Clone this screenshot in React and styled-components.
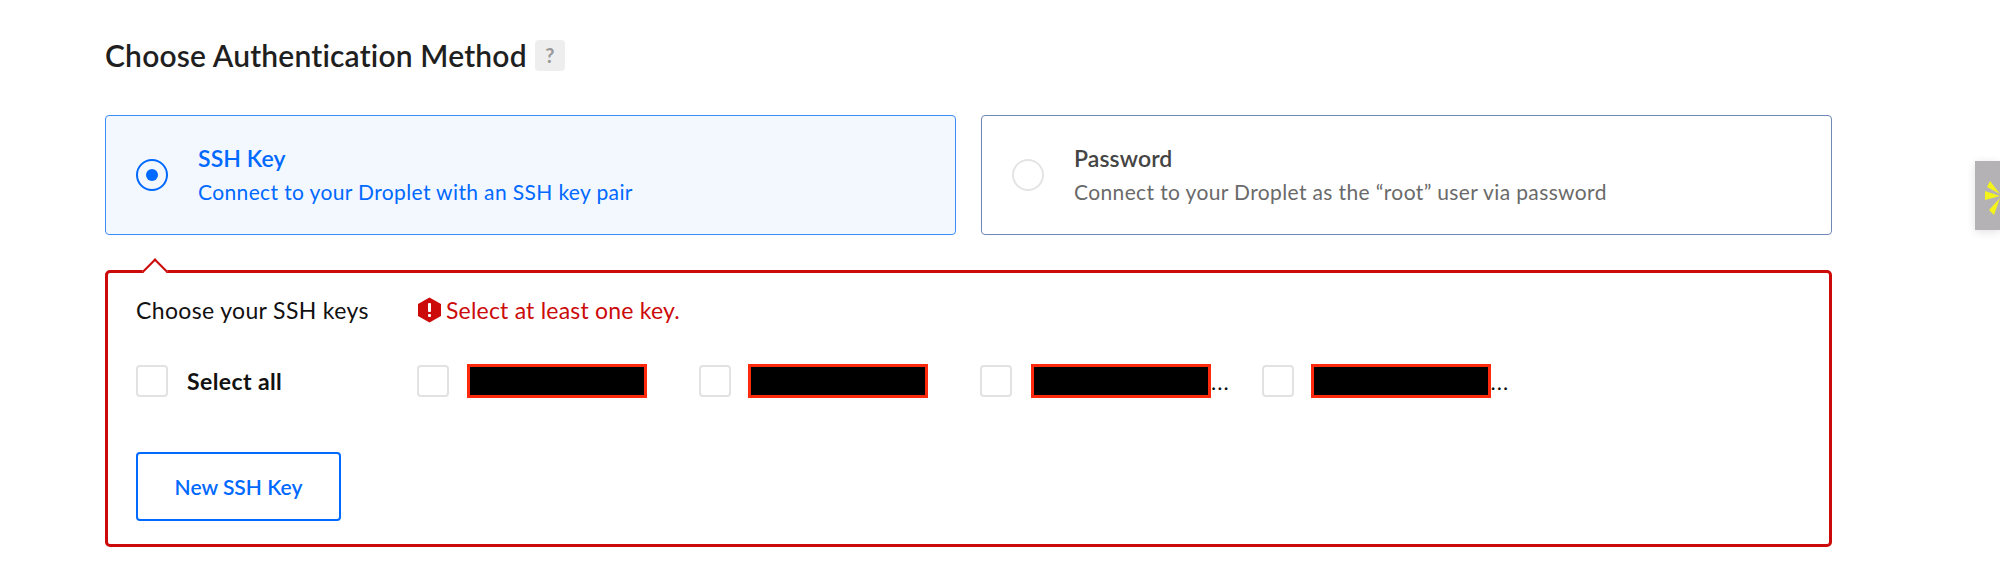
import styled, { createGlobalStyle } from "styled-components";

const GlobalStyle = createGlobalStyle`
  html, body {
    margin: 0;
    padding: 0;
    background: #fff;
    overflow: hidden;
  }
  body {
    font-family: Lato, "Open Sans", "Liberation Sans", sans-serif;
    font-variant-ligatures: none;
    color: #000;
  }
`;

const Page = styled.main`
  width: 1727px;
  padding: 35px 0 0 105px;
`;

const HeadingRow = styled.div`
  display: flex;
  align-items: center;
  gap: 8px;
  height: 40px;
  margin-bottom: 40px;
`;

const Heading = styled.h2`
  margin: 0;
  font-size: 30px;
  font-weight: 600;
  letter-spacing: 0.18px;
  color: #1f1f1f;
  line-height: 40px;
`;

const HelpBadge = styled.span`
  display: flex;
  align-items: center;
  justify-content: center;
  width: 30px;
  height: 31px;
  border-radius: 4px;
  background: #eeeeee;
  color: #999;
  font-size: 20px;
  font-weight: 700;
`;

const Options = styled.div`
  display: grid;
  grid-template-columns: 851px 851px;
  gap: 25px;
  margin-bottom: 35px;
`;

const OptionCard = styled.div`
  display: flex;
  align-items: center;
  gap: 30px;
  box-sizing: border-box;
  height: 120px;
  padding-left: 30px;
  border-radius: 4px;
  border: 1.5px solid ${({ $active }) => ($active ? "#3d8bf5" : "#7088b5")};
  background: ${({ $active }) => ($active ? "#f3f8ff" : "#fff")};
`;

const Radio = styled.span`
  display: flex;
  align-items: center;
  justify-content: center;
  flex: none;
  box-sizing: border-box;
  width: 32px;
  height: 32px;
  border-radius: 50%;
  border: ${({ $active }) =>
    $active ? "2px solid #0069ff" : "2px solid #e4e4e4"};

  &::after {
    content: "";
    display: ${({ $active }) => ($active ? "block" : "none")};
    width: 12px;
    height: 12px;
    border-radius: 50%;
    background: #0069ff;
  }
`;

const OptionText = styled.div`
  display: flex;
  flex-direction: column;
  gap: 8px;
  padding-bottom: 1px;
  color: ${({ $active }) => ($active ? "#0069ff" : "#6a6a6a")};
`;

const OptionTitle = styled.span`
  font-size: 23px;
  line-height: 26px;
  font-weight: 600;
  letter-spacing: 0.1px;
  color: ${({ $active }) => ($active ? "#0069ff" : "#444")};
`;

const OptionDesc = styled.span`
  font-size: 21px;
  line-height: 26px;
  letter-spacing: 0.37px;
`;

const KeysPanel = styled.section`
  position: relative;
  box-sizing: border-box;
  height: 277px;
  padding: 22px 28px 0;
  border: 3px solid #cc0a0a;
  border-radius: 5px;

  &::before {
    content: "";
    position: absolute;
    top: -11px;
    left: 38px;
    width: 16px;
    height: 16px;
    background: #fff;
    border-top: 2px solid #cc0a0a;
    border-left: 2px solid #cc0a0a;
    transform: rotate(45deg);
  }
`;

const KeyGrid = styled.div`
  display: grid;
  grid-template-columns: 281px repeat(4, 281.5px);
  align-items: center;
`;

const PanelLabel = styled.span`
  font-size: 23px;
  line-height: 30px;
  letter-spacing: 0.35px;
  color: #111;
`;

const ErrorText = styled.span`
  display: flex;
  align-items: center;
  gap: 4px;
  grid-column: 2 / 4;
  font-size: 23px;
  line-height: 30px;
  letter-spacing: 0.2px;
  color: #cc0a0a;
`;

const KeyRow = styled(KeyGrid)`
  margin-top: 39px;
`;

const KeyOption = styled.label`
  display: flex;
  align-items: center;
  gap: ${({ $gap }) => $gap}px;
`;

const Checkbox = styled.span`
  flex: none;
  box-sizing: border-box;
  width: 32px;
  height: 32px;
  border: 2px solid #e2e2e2;
  border-radius: 4px;
  background: #fff;
`;

const SelectAll = styled.span`
  font-size: 23px;
  font-weight: 700;
  letter-spacing: 0.4px;
  color: #111;
`;

const KeyName = styled.span`
  display: flex;
  align-items: flex-end;
  font-size: 22px;
  line-height: 32px;
  letter-spacing: 1px;
  color: #111;
`;

const Redaction = styled.span`
  display: block;
  box-sizing: border-box;
  width: 180px;
  height: 34px;
  background: #000;
  border: 3px solid #ff2a0d;
`;

const NewKeyButton = styled.button`
  display: block;
  box-sizing: border-box;
  width: 205px;
  height: 69px;
  margin-top: 54px;
  padding: 0;
  background: #fff;
  border: 2px solid #0069ff;
  border-radius: 4px;
  color: #0069ff;
  font-family: inherit;
  font-size: 21px;
  font-weight: 600;
`;

const SideTab = styled.div`
  position: fixed;
  top: 161px;
  right: 0;
  width: 25px;
  height: 69px;
  background: #b5b2b5;
  box-shadow: 0 2px 10px rgba(0, 0, 0, 0.12);
  overflow: hidden;
`;

const keys = [
  { gap: 18, more: false },
  { gap: 17, more: false },
  { gap: 19, more: true },
  { gap: 17, more: true },
];

function AlertIcon() {
  return (
    <svg width="25" height="26" viewBox="0 0 25 26" aria-hidden="true">
      <path d="M12.5 0.5 24 7v12l-11.5 6.5L1 19V7z" fill="#cc0a0a" />
      <rect x="11" y="6" width="3" height="9" rx="1" fill="#fff" />
      <rect x="11" y="17" width="3" height="3" rx="1" fill="#fff" />
    </svg>
  );
}

function SparkIcon() {
  return (
    <svg width="25" height="69" viewBox="0 0 25 69" aria-hidden="true">
      <path
        d="M25 33 15 20 12 26zM25 35 10 30v9zM25 37 19 54 14 49z"
        fill="#f4f41a"
      />
    </svg>
  );
}

export default function App() {
  return (
    <>
      <GlobalStyle />
      <Page>
        <HeadingRow>
          <Heading>Choose Authentication Method</Heading>
          <HelpBadge>?</HelpBadge>
        </HeadingRow>
        <Options>
          <OptionCard $active>
            <Radio $active />
            <OptionText $active>
              <OptionTitle $active>SSH Key</OptionTitle>
              <OptionDesc>Connect to your Droplet with an SSH key pair</OptionDesc>
            </OptionText>
          </OptionCard>
          <OptionCard>
            <Radio />
            <OptionText>
              <OptionTitle>Password</OptionTitle>
              <OptionDesc>
                Connect to your Droplet as the “root” user via password
              </OptionDesc>
            </OptionText>
          </OptionCard>
        </Options>
        <KeysPanel>
          <KeyGrid>
            <PanelLabel>Choose your SSH keys</PanelLabel>
            <ErrorText>
              <AlertIcon />
              Select at least one key.
            </ErrorText>
          </KeyGrid>
          <KeyRow>
            <KeyOption $gap={19}>
              <Checkbox />
              <SelectAll>Select all</SelectAll>
            </KeyOption>
            {keys.map((key, i) => (
              <KeyOption key={i} $gap={key.gap}>
                <Checkbox />
                <KeyName>
                  <Redaction />
                  {key.more && "..."}
                </KeyName>
              </KeyOption>
            ))}
          </KeyRow>
          <NewKeyButton>New SSH Key</NewKeyButton>
        </KeysPanel>
      </Page>
      <SideTab>
        <SparkIcon />
      </SideTab>
    </>
  );
}
